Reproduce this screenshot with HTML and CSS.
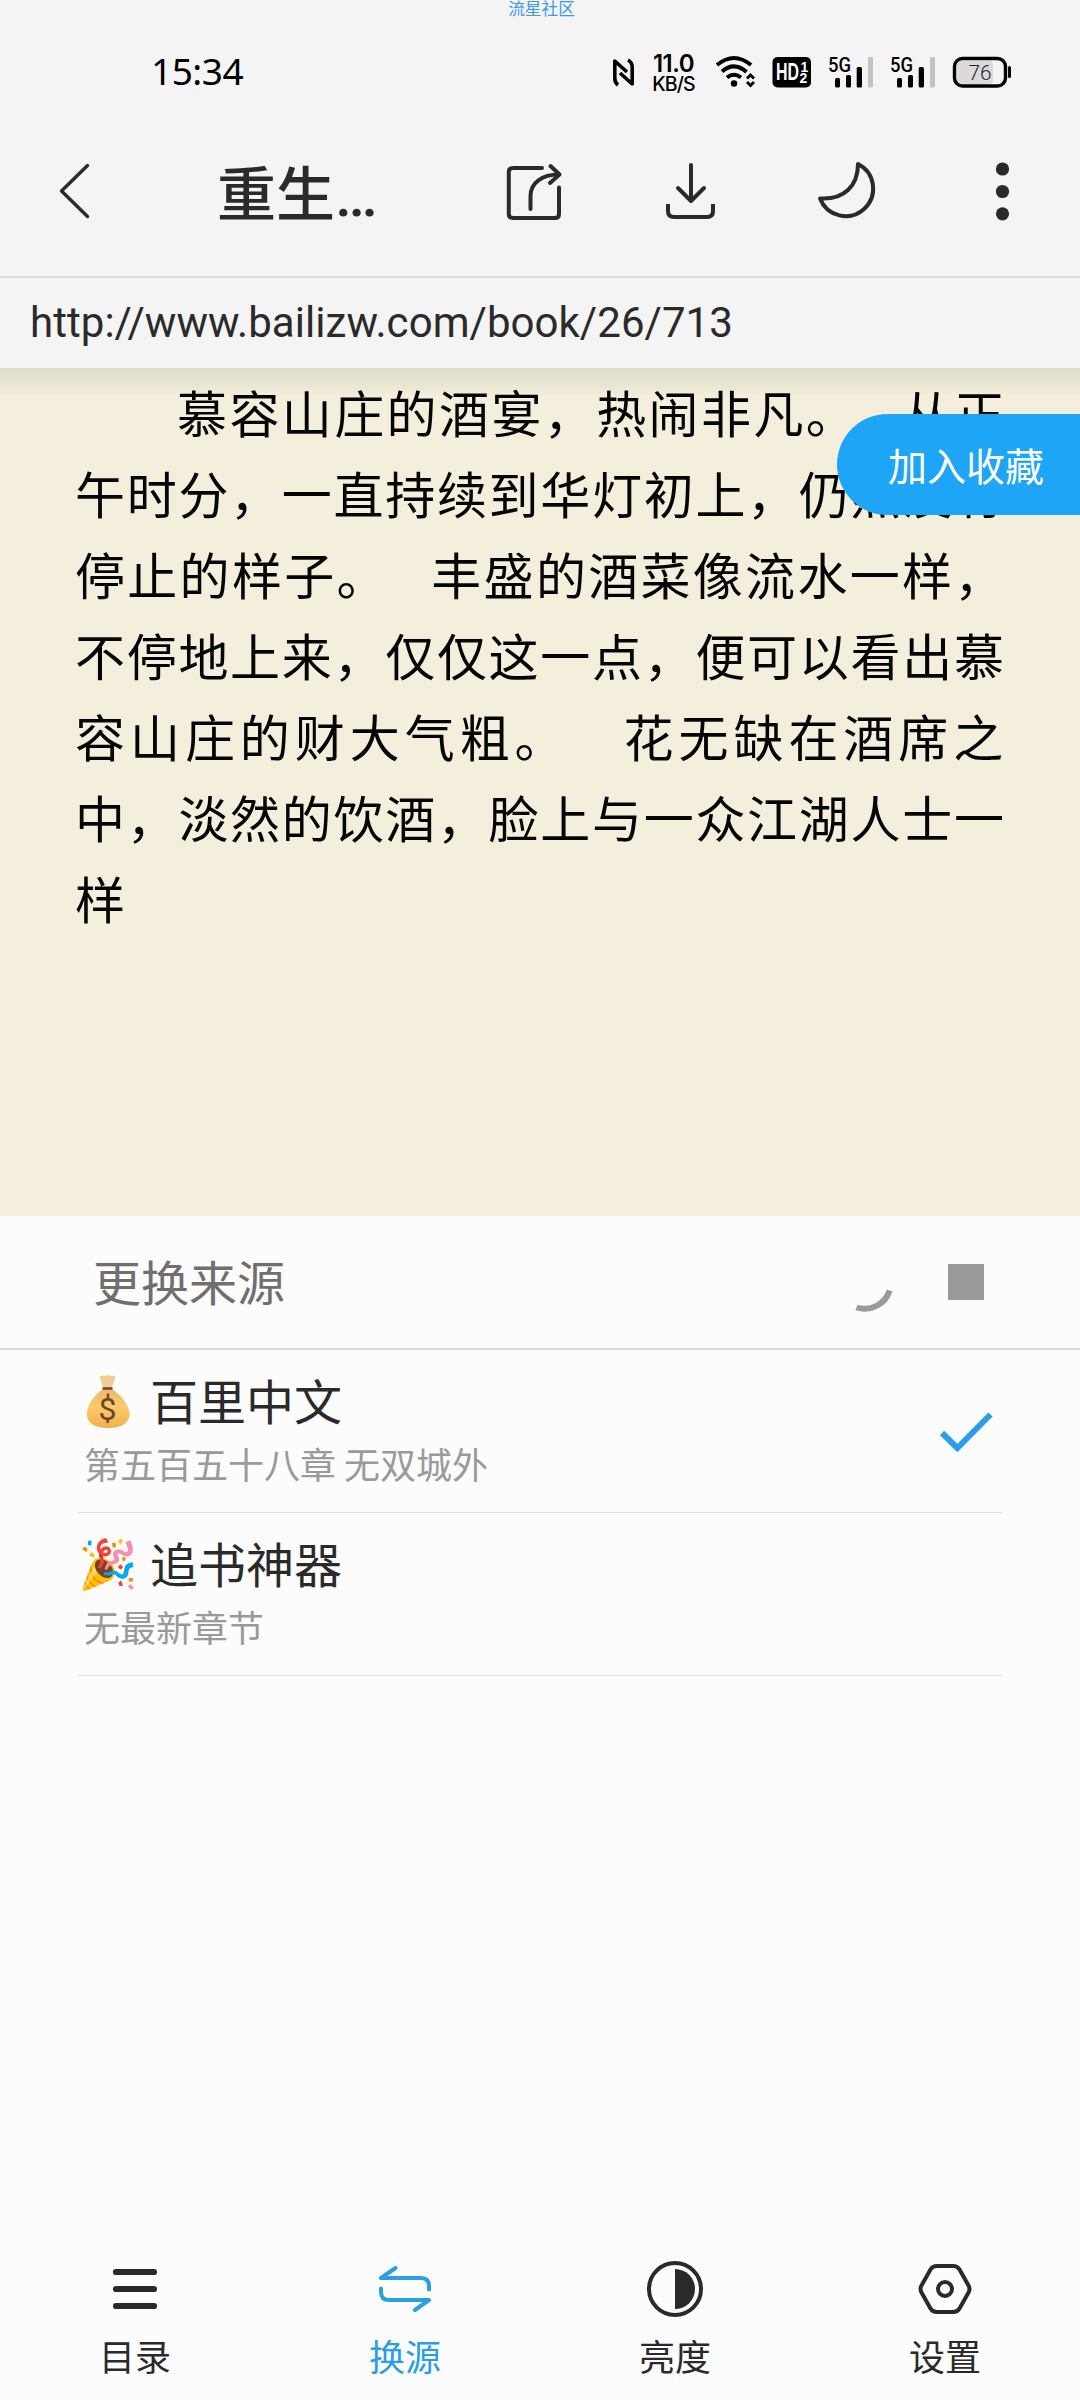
FILE: index.html
```html
<!DOCTYPE html>
<html lang="zh-CN">
<head>
<meta charset="utf-8">
<title>重生</title>
<link rel="stylesheet" href="styles.css">
</head>
<body>
<div class="screen">
  <header class="top">
    <div class="brand">流星社区</div>
    <div class="status">
      <span class="clock">15:34</span>
      <div class="indicators">
        <svg width="25" height="36" viewBox="0 0 25 36" fill="none" stroke="#000" stroke-width="3.6" stroke-linejoin="round">
          <path d="M7 33 C4 31 3.800 29 3.800 26 V9 L16 20"/><path d="M17 8 C20.500 10 21.200 12 21.200 15 V32 L9 21"/>
        </svg>
        <div class="speed"><b>11.0</b><span>KB/S</span></div>
        <svg class="wifi" width="44" height="36" viewBox="0 0 44 36" fill="none" stroke="#000" stroke-width="4">
          <path d="M3 13 Q20 -1 37 13"/><path d="M8 19.500 Q20 9 32.500 20"/><path d="M13 25.500 Q20 20 27 25.500"/>
          <circle cx="20" cy="31.500" r="3.200" fill="#000" stroke="none"/>
          <path d="M33 26.500 L36.500 23 L40 26.500 M33 30 L36.500 33.500 L40 30" stroke-width="2.800"/>
        </svg>
        <svg class="hd" width="40" height="36" viewBox="0 0 40 36">
          <rect x="0.500" y="5" width="38.500" height="30.500" rx="5"/>
          <text x="4" y="28" class="hd-main" textLength="23" lengthAdjust="spacingAndGlyphs">HD</text>
          <text x="28.500" y="19.500" class="hd-num">1</text><text x="27.500" y="31" class="hd-num">2</text>
        </svg>
        <svg class="signal" width="47" height="36" viewBox="0 0 47 36">
          <text x="0" y="19.500" class="net" textLength="23" lengthAdjust="spacingAndGlyphs">5G</text>
          <rect x="7" y="26" width="5" height="9.500" rx="1.500"/><rect x="18" y="23" width="5" height="12.500" rx="1.500"/>
          <rect x="28.700" y="15" width="5.300" height="20.500" rx="1.500"/><rect x="40" y="5" width="5" height="30.500" rx="1" fill="#c4c4c4"/>
        </svg>
        <svg class="signal" width="47" height="36" viewBox="0 0 47 36">
          <text x="0" y="19.500" class="net" textLength="23" lengthAdjust="spacingAndGlyphs">5G</text>
          <rect x="7" y="26" width="5" height="9.500" rx="1.500"/><rect x="18" y="23" width="5" height="12.500" rx="1.500"/>
          <rect x="28.700" y="15" width="5.300" height="20.500" rx="1.500"/><rect x="40" y="5" width="5" height="30.500" rx="1" fill="#c4c4c4"/>
        </svg>
        <svg class="battery" width="60" height="36" viewBox="0 0 60 36">
          <rect x="5" y="9" width="36" height="23" rx="4" fill="#dadada"/>
          <rect x="2.500" y="6.500" width="51" height="27.500" rx="8" fill="none" stroke="#000" stroke-width="3.400"/>
          <rect x="56" y="14" width="3" height="12" rx="1.500"/>
          <text x="16.500" y="27.500" class="charge" textLength="23" lengthAdjust="spacingAndGlyphs">76</text>
        </svg>
      </div>
    </div>
    <div class="toolbar">
      <svg class="back" width="36" height="60" viewBox="57 161 36 60"><path class="stroke" d="M87.500 165.500 L61.500 191 L87.500 216.500" stroke-width="3.400"/></svg>
      <h1 class="title">重生<span class="dots">…</span></h1>
      <svg class="share" width="64" height="64" viewBox="503 160 64 64"><g class="stroke" stroke-width="4">
        <path d="M542 168 H513 Q508.800 168 508.800 172 V214 Q508.800 218 513 218 H555 Q559 218 559 214 V187.500"/>
        <path d="M530.500 209 V196 C530.500 183 542 174.500 559 174.500"/><path d="M550.500 166 L559.500 174.500 L550 183"/></g></svg>
      <svg class="download" width="64" height="64" viewBox="659 160 64 64"><g class="stroke" stroke-width="4">
        <path d="M691 165 V201 M678 188 L691 201 L704 188"/><path stroke-linecap="butt" d="M668 204 V211 Q668 217 674 217 H707 Q713 217 713 211 V204"/></g></svg>
      <svg class="moon" width="64" height="64" viewBox="814 160 64 64"><path class="stroke" stroke-width="4" d="M858 164 A27.500 27.500 0 1 1 820 198.500 C844 200 858 186 858 164 Z"/></svg>
      <svg class="more" width="20" height="64" viewBox="992 160 20 64" fill="#2a2a2a"><circle cx="1002.500" cy="169" r="6.600"/><circle cx="1002.500" cy="191.500" r="6.600"/><circle cx="1002.500" cy="213.800" r="6.600"/></svg>
    </div>
    <div class="address">http://www.bailizw.com/book/26/713</div>
  </header>

  <main class="reader">
    <div class="page">
      <p class="row first">慕容山庄的酒宴，热闹非凡。<i class="gap"></i>从正</p>
      <p class="row">午时分，一直持续到华灯初上，仍然没有</p>
      <p class="row third">停止的样子。<i class="gap"></i>丰盛的酒菜像流水一样，</p>
      <p class="row">不停地上来，仅仅这一点，便可以看出慕</p>
      <p class="row fifth">容山庄的财大气粗。<i class="gap"></i>花无缺在酒席之</p>
      <p class="row">中，淡然的饮酒，脸上与一众江湖人士一</p>
      <p class="row">样</p>
    </div>
    <button class="favorite">加入收藏</button>
  </main>

  <section class="sources">
    <div class="sources-head">
      <h2>更换来源</h2>
      <svg class="spinner" width="60" height="60" viewBox="834 1253 60 60" fill="none" stroke="#9a9a9a" stroke-width="6"><path d="M856.500 1308.500 A26.500 26.500 0 0 0 889.700 1291.500"/></svg>
      <span class="stop"></span>
    </div>
    <ul class="list">
      <li class="item">
        <div class="info">
          <div class="name">
            <svg class="bag" width="60" height="58" viewBox="78 1374 60 58">
              <defs><linearGradient id="bag-fill" x1="0" y1="0" x2="0" y2="1"><stop offset="0" stop-color="#edb968"/><stop offset="0.450" stop-color="#fbca6c"/><stop offset="1" stop-color="#f2b04a"/></linearGradient></defs>
              <path fill="#f0cd94" d="M99.500 1378 Q102 1375.500 105 1377 Q109 1375.500 112 1377 Q116 1376 115 1379.500 L111.500 1390 H103.500 Z"/>
              <path fill="url(#bag-fill)" d="M103 1390 H112 C121 1396 129.500 1406 129.500 1415 C129.500 1425 120 1429 108 1429 C96 1429 87 1425 87 1415 C87 1406 94 1396 103 1390 Z"/>
              <path stroke="#6d4430" stroke-width="2.400" stroke-linecap="round" d="M103.500 1389.500 H111.500"/>
              <text class="dollar" x="107.500" y="1421" text-anchor="middle">$</text>
            </svg>
            <span>百里中文</span>
          </div>
          <div class="chapter">第五百五十八章 无双城外</div>
        </div>
        <svg class="check" width="60" height="44" viewBox="938 1409 60 44" fill="none" stroke="#2a9fe6" stroke-width="6"><path d="M942 1433 L957.300 1448 L990.500 1414.500"/></svg>
      </li>
      <li class="item">
        <div class="info">
          <div class="name"><span class="emoji">🎉</span><span>追书神器</span></div>
          <div class="chapter">无最新章节</div>
        </div>
      </li>
    </ul>
  </section>

  <nav class="tabs">
    <a class="tab">
      <svg width="64" height="64" viewBox="103 2257 64 64"><path class="stroke" stroke-width="6.200" d="M116 2272 H154 M116 2289 H154 M116 2306 H154"/></svg>
      <span>目录</span>
    </a>
    <a class="tab active">
      <svg width="64" height="64" viewBox="373 2257 64 64"><path class="stroke" stroke-width="4" d="M395.500 2268 L381 2278 H421 Q429 2278 429 2286 V2289.500 M381 2288.500 V2292 Q381 2300 389 2300 H429 L415 2310"/></svg>
      <span>换源</span>
    </a>
    <a class="tab">
      <svg width="64" height="64" viewBox="643 2257 64 64"><circle class="stroke" stroke-width="4" cx="675" cy="2289" r="26"/><path fill="#2a2a2a" d="M675 2269 A20 20 0 0 1 675 2309 Z"/></svg>
      <span>亮度</span>
    </a>
    <a class="tab">
      <svg width="64" height="64" viewBox="913 2257 64 64"><g class="stroke" stroke-width="4"><path d="M937 2266 H953 Q957.500 2266 959.500 2269.500 L968.500 2285.500 Q970.500 2289 968.500 2292.500 L959.500 2308.500 Q957.500 2312 953 2312 H937 Q932.500 2312 930.500 2308.500 L921.500 2292.500 Q919.500 2289 921.500 2285.500 L930.500 2269.500 Q932.500 2266 937 2266 Z"/><circle cx="945" cy="2289" r="7"/></g></svg>
      <span>设置</span>
    </a>
  </nav>
</div>
</body>
</html>
```
FILE: styles.css
```css
* { box-sizing: border-box; margin: 0; padding: 0; }
body { background: #fcfcfc; color: #2a2a2a; font-family: "Noto Sans CJK SC", sans-serif; font-weight: 400; }
.screen { width: 1080px; height: 2400px; display: flex; flex-direction: column; overflow: hidden; }
svg { display: block; flex: none; }
.stroke { fill: none; stroke: #2a2a2a; stroke-linecap: round; stroke-linejoin: round; }

.top { background: #f4f4f4; height: 368px; flex: none; display: flex; flex-direction: column; }
.brand { height: 20px; line-height: 17px; font-size: 16.7px; color: #3f97ea; text-align: center; padding-left: 3px; }
.status { height: 87px; display: flex; align-items: flex-start; padding: 32px 68px 0 151px; justify-content: space-between; color: #000; }
.clock { font: 37px/38px "Noto Sans", sans-serif; letter-spacing: -0.5px; }
.indicators { display: flex; }
.speed { width: 47px; margin-left: 14px; display: flex; flex-direction: column; align-items: center; font-family: Inter, sans-serif; }
.speed b { font-size: 24px; line-height: 24px; font-weight: 600; letter-spacing: -0.5px; }
.speed span { font-size: 19.5px; line-height: 16px; font-weight: 500; letter-spacing: -0.9px; }
.wifi { margin-left: 17px; }
.hd { margin-left: 14px; }
.signal { margin-left: 16px; }
.signal + .signal { margin-left: 15px; }
.battery { margin-left: 15px; }
.hd-main { font: bold 24px "Liberation Sans", sans-serif; fill: #fff; }
.hd-num { font: bold 14px "Liberation Sans", sans-serif; fill: #fff; }
.net { font: 500 21px Roboto, sans-serif; }
.charge { font: 300 21px Roboto, sans-serif; fill: #222; }

.toolbar { height: 171px; border-bottom: 2px solid #dcdcdc; padding: 53px 68px 0 57px; display: flex; align-items: flex-start; }
.title { font: 500 59px/64px "Noto Sans CJK SC", sans-serif; width: 170px; margin-left: 124px; margin-top: -1px; white-space: nowrap; margin-right: 116px; }
.dots { font-family: Roboto, sans-serif; font-size: 60px; }
.back { margin-top: 1px; }
.download { margin-left: 92px; }
.moon { margin-left: 91px; }
.more { margin-left: 114px; }
.address { height: 90px; line-height: 90px; padding-left: 30px; font-family: Roboto, sans-serif; font-size: 42px; letter-spacing: 0.05px; }

.reader { position: relative; height: 848px; flex: none; background: linear-gradient(#dfddcb, #e4e0ce 9px, #f4eedc 28px); color: #050505; }
.page { padding: 3px 0 0 75px; }
.row { height: 81px; line-height: 81px; font-size: 50px; letter-spacing: 1.7px; white-space: nowrap; }
.first { padding-left: 102px; letter-spacing: 2.4px; }
.third { letter-spacing: 2.3px; }
.fifth { letter-spacing: 4.950px; }
.gap { display: inline-block; width: 42.500px; }
.first .gap { width: 44px; }
.fifth .gap { width: 54px; }
.favorite { position: absolute; top: 46px; right: 0; width: 243px; height: 101px; border: 0; border-radius: 51px 0 0 51px; background: #1fa5f6; color: #fff; font: 39px/99px "Noto Sans CJK SC", sans-serif; padding: 0 0 1px 51px; text-align: left; }

.sources { flex: 1; }
.sources-head { height: 134px; border-bottom: 2px solid #dadada; padding: 0 96px 0 93px; display: flex; align-items: center; }
.sources-head h2 { flex: 1; font-size: 48px; font-weight: 400; color: #6f6f6f; line-height: 70px; margin-bottom: 4px; }
.stop { width: 36px; height: 36px; background: #9a9a9a; margin-left: 54px; margin-bottom: 1px; }
.list { list-style: none; padding: 0 78px; }
.item { height: 163px; border-bottom: 1px solid #e0e0e0; display: flex; align-items: center; justify-content: space-between; }
.info { margin-bottom: 6px; }
.name { display: flex; align-items: center; font-size: 48px; line-height: 68px; height: 70px; }
.name > span:last-child { margin-bottom: 2px; }
.bag { margin-right: 12px; margin-top: 4px; }
.dollar { font: 32px Roboto, sans-serif; fill: #6d4430; }
.emoji { width: 72px; font-size: 48px; font-family: "Noto Color Emoji", sans-serif; padding-top: 4px; }
.chapter { font-size: 36px; line-height: 56px; color: #9a9a9a; padding-left: 6px; }
.check { margin-right: 4px; }

.tabs { height: 160px; flex: none; display: grid; grid-template-columns: repeat(4, 1fr); }
.tab { display: flex; flex-direction: column; align-items: center; padding-top: 17px; font-size: 36px; line-height: 48px; gap: 10px; }
.active { color: #2a9fe6; }
.active .stroke { stroke: #2a9fe6; }
```
